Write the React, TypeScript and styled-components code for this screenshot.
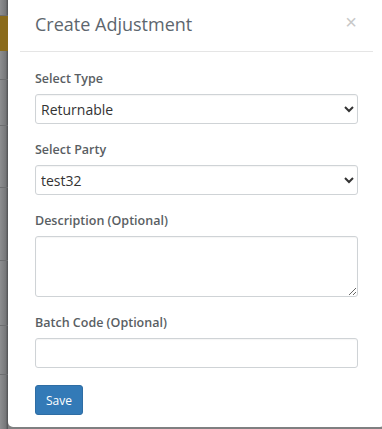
import React from "react"
import styled, { createGlobalStyle } from "styled-components"

const GlobalStyle = createGlobalStyle`
  html, body {
    margin: 0;
    padding: 0;
    height: 100%;
    overflow: hidden;
    background: #7f8081;
  }
  body {
    font-family: "Open Sans", "Liberation Sans", sans-serif;
  }
`

const BACKDROP_ROWS = [15, 34, 28, 45, 61, 72, 64, 48, 62]

const App = () => (
  <>
    <GlobalStyle />
    <Screen>
      <Backdrop>
        {BACKDROP_ROWS.map((h, i) => (
          <BackdropRow key={i} $height={h} $accent={i === 1} />
        ))}
      </Backdrop>

      <Modal>
        <Header>
          <Title>Create Adjustment</Title>
          <Close aria-label="close">×</Close>
        </Header>

        <Body>
          <Group>
            <Label>Select Type</Label>
            <Select defaultValue="returnable">
              <option value="returnable">Returnable</option>
              <option value="non-returnable">Non Returnable</option>
            </Select>
          </Group>

          <Group>
            <Label>Select Party</Label>
            <Select defaultValue="test32">
              <option value="test32">test32</option>
            </Select>
          </Group>

          <Group>
            <Label>Description (Optional)</Label>
            <TextArea />
          </Group>

          <Group>
            <Label>Batch Code (Optional)</Label>
            <Input type="text" />
          </Group>

          <SaveButton type="button">Save</SaveButton>
        </Body>
      </Modal>
    </Screen>
  </>
)

export default App

const Screen = styled.div`
  display: flex;
  align-items: flex-start;
  width: 382px;
  height: 429px;
  overflow: hidden;
`

const Backdrop = styled.div`
  display: flex;
  flex-direction: column;
  flex: 0 0 8px;
  height: 429px;
  background: linear-gradient(to right, #8d8e90, #77787a 70%, #4f5052);
`

const BackdropRow = styled.div<{ $height: number; $accent: boolean }>`
  height: ${({ $height }) => $height}px;
  flex: 0 0 auto;
  border-bottom: 1px solid ${({ $accent }) => ($accent ? "transparent" : "#6d6e70")};
  background: ${({ $accent }) => ($accent ? "#8a6b1c" : "transparent")};
`

const Modal = styled.div`
  flex: 0 0 377px;
  background: #fff;
  border-radius: 0 0 5px 5px;
  height: 427px;
  box-sizing: border-box;
`

const Header = styled.div`
  display: flex;
  align-items: flex-start;
  justify-content: space-between;
  margin: 0 12px;
  padding: 9px 16px 0 15px;
  height: 52px;
  box-sizing: border-box;
  border-bottom: 1px solid #e5e5e5;
`

const Title = styled.h4`
  margin: 0;
  font-size: 18px;
  font-weight: 400;
  line-height: 31px;
  color: #5d666e;
`

const Close = styled.button`
  border: 0;
  background: none;
  padding: 0;
  margin-top: 3px;
  font-family: "Liberation Sans", sans-serif;
  font-size: 20px;
  line-height: 20px;
  color: #c8c8c8;
  cursor: pointer;
`

const Body = styled.div`
  padding: 17px 27px 14px 27px;
`

const Group = styled.div`
  margin-bottom: 16px;
`

const Label = styled.label`
  display: block;
  font-size: 12.5px;
  font-weight: 600;
  line-height: 20px;
  margin-bottom: 5px;
  color: #595e63;
`

const fieldBase = `
  display: block;
  width: 100%;
  box-sizing: border-box;
  border: 1px solid #cfd3d6;
  border-radius: 3px;
  background: #fff;
  font-family: "Open Sans", "Liberation Sans", sans-serif;
  font-size: 14px;
  color: #333;
  box-shadow: inset 0 1px 1px rgba(0, 0, 0, 0.04);
`

const Select = styled.select`
  ${fieldBase}
  height: 30px;
  padding: 0 1px;
`

const Input = styled.input`
  ${fieldBase}
  height: 30px;
  padding: 0 5px;
`

const TextArea = styled.textarea`
  ${fieldBase}
  height: 61px;
  padding: 5px;
`

const SaveButton = styled.button`
  margin-top: 1px;
  height: 30px;
  padding: 0 10px;
  border: 1px solid #2e6da4;
  border-radius: 3px;
  background: #337ab7;
  color: #fff;
  font-family: "Open Sans", "Liberation Sans", sans-serif;
  font-size: 12px;
  cursor: pointer;
`
